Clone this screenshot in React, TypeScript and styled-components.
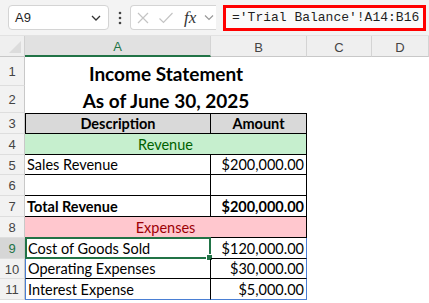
import React from "react";
import styled, { createGlobalStyle, css } from "styled-components";

const Global = createGlobalStyle`
  html, body { margin: 0; padding: 0; background: #ffffff; }
  body { font-family: "Segoe UI", "Liberation Sans", Arial, sans-serif; overflow: hidden; }
  * { box-sizing: border-box; }
`;

const Page = styled.div`
  width: 429px;
  height: 303px;
  overflow: hidden;
  background: #ffffff;
`;

/* ---------- Formula bar ---------- */
const Toolbar = styled.div`
  height: 35px;
  background: #f3f3f3;
  display: flex;
  align-items: center;
  padding: 0 3px 0 8px;
`;

const NameBox = styled.div`
  width: 101px;
  height: 25px;
  background: #ffffff;
  border: 1px solid #d4d4d4;
  border-radius: 4px;
  display: flex;
  align-items: center;
  justify-content: space-between;
  padding: 0 6px 0 6px;
  font-family: "Liberation Sans", Arial, sans-serif;
  font-size: 13px;
  color: #1f1f1f;
`;

const Dots = styled.div`
  width: 21px;
  display: flex;
  justify-content: center;
  color: #444;
`;

const FxBox = styled.div`
  width: 86px;
  height: 25px;
  background: #ffffff;
  border: 1px solid #d4d4d4;
  border-right: none;
  border-radius: 4px 0 0 4px;
  display: flex;
  align-items: center;
  gap: 8px;
  padding-left: 5px;
`;

const FxText = styled.span`
  font-family: "Liberation Serif", "Times New Roman", serif;
  font-style: italic;
  font-size: 17px;
  color: #333;
  margin-left: 2px;
`;

const FormulaInput = styled.div`
  flex: 1;
  height: 26px;
  margin-left: 7px;
  border: 3px solid #ff0000;
  background: #fafafa;
  display: flex;
  align-items: center;
  padding-left: 6px;
  font-family: "Liberation Mono", "DejaVu Sans Mono", monospace;
  font-size: 13px;
  color: #1f1f1f;
  white-space: nowrap;
`;

/* ---------- Sheet ---------- */
const COLS = "25px 186px 96px 65px 1fr";

const HeaderRow = styled.div`
  display: grid;
  grid-template-columns: ${COLS};
  height: 22px;
  background: #efefef;
  border-top: 1px solid #e2e2e2;
`;

const Corner = styled.div`
  position: relative;
  border-right: 1px solid #d0d0d0;
  border-bottom: 1px solid #c8c8c8;
  &::after {
    content: "";
    position: absolute;
    right: 3px;
    bottom: 3px;
    border-left: 12px solid transparent;
    border-bottom: 12px solid #dcdcdc;
  }
`;

const ColHead = styled.div<{ $active?: boolean }>`
  display: flex;
  align-items: center;
  justify-content: center;
  padding-top: 2px;
  font-family: "Liberation Sans", Arial, sans-serif;
  font-size: 13px;
  color: #444;
  border-right: 1px solid #d4d4d4;
  border-bottom: 1px solid #c8c8c8;
  ${(p) =>
    p.$active &&
    css`
      background: #e1e1e1;
      color: #217346;
      border-bottom: 2px solid #217346;
    `}
`;

const Row = styled.div<{ $h: number }>`
  display: grid;
  grid-template-columns: ${COLS};
  height: ${(p) => p.$h}px;
`;

const RowHead = styled.div<{ $active?: boolean }>`
  display: flex;
  align-items: center;
  justify-content: center;
  background: ${(p) => (p.$active ? "#d6d6d6" : "#f2f2f2")};
  color: ${(p) => (p.$active ? "#217346" : "#444")};
  border-right: 1px solid #c8c8c8;
  border-bottom: 1px solid #dedede;
  font-family: "Liberation Sans", Arial, sans-serif;
  font-size: 13px;
  padding-top: 1px;
`;

type CellProps = {
  $span?: number;
  $align?: "left" | "center" | "right";
  $bold?: boolean;
  $bg?: string;
  $color?: string;
  $table?: boolean;
  $top?: boolean;
  $left?: boolean;
  $size?: number;
  $blueLeft?: boolean;
  $blueRight?: boolean;
  $blueBottom?: boolean;
};

const Cell = styled.div<CellProps>`
  position: relative;
  grid-column: span ${(p) => p.$span ?? 1};
  display: flex;
  align-items: flex-end;
  justify-content: ${(p) =>
    p.$align === "center" ? "center" : p.$align === "right" ? "flex-end" : "flex-start"};
  padding: 0 2px 1px 2px;
  font-family: Lato, "Open Sans", "Liberation Sans", sans-serif;
  font-size: ${(p) => p.$size ?? 14.5}px;
  font-weight: ${(p) => (p.$bold ? 700 : 400)};
  color: ${(p) => p.$color ?? "#000"};
  background: ${(p) => p.$bg ?? "transparent"};
  white-space: nowrap;
  ${(p) =>
    p.$table &&
    css`
      border-right: 1px solid #000;
      border-bottom: 1px solid #000;
    `}
  ${(p) => p.$top && css`border-top: 1px solid #000;`}
  ${(p) => p.$left && css`border-left: 1px solid #000;`}
  ${(p) => p.$blueLeft && css`border-left: 1px solid #4a7fd4;`}
  ${(p) => p.$blueRight && css`border-right: 1px solid #4a7fd4;`}
  ${(p) => p.$blueBottom && css`border-bottom: 1px solid #4a7fd4;`}
`;

const Empty = styled.div``;

const Selection = styled.div`
  position: absolute;
  left: -1px;
  top: -1px;
  right: -1px;
  bottom: -1px;
  border: 2px solid #217346;
  pointer-events: none;
  &::after {
    content: "";
    position: absolute;
    right: -4px;
    bottom: -4px;
    width: 5px;
    height: 5px;
    background: #217346;
    border: 1px solid #fff;
  }
`;

const Chevron = () => (
  <svg width="12" height="8" viewBox="0 0 12 8">
    <path d="M2 2 L6 6 L10 2" fill="none" stroke="#333" strokeWidth="1.3" />
  </svg>
);

const VDots = () => (
  <svg width="4" height="14" viewBox="0 0 4 14">
    <circle cx="2" cy="2" r="1.3" fill="#444" />
    <circle cx="2" cy="7" r="1.3" fill="#444" />
    <circle cx="2" cy="12" r="1.3" fill="#444" />
  </svg>
);

const CrossIcon = () => (
  <svg width="14" height="14" viewBox="0 0 14 14">
    <path d="M2 2 L12 12 M12 2 L2 12" stroke="#c4c4c4" strokeWidth="1.2" fill="none" />
  </svg>
);

const CheckIcon = () => (
  <svg width="16" height="14" viewBox="0 0 16 14">
    <path d="M1.5 7.5 L5.5 11.5 L14.5 2" stroke="#c4c4c4" strokeWidth="1.2" fill="none" />
  </svg>
);

const SmallChevron = () => (
  <svg width="10" height="7" viewBox="0 0 10 7">
    <path d="M1 1.5 L5 5.5 L9 1.5" fill="none" stroke="#999" strokeWidth="1.2" />
  </svg>
);

export default function App() {
  return (
    <Page>
      <Global />
      <Toolbar>
        <NameBox>
          <span>A9</span>
          <Chevron />
        </NameBox>
        <Dots>
          <VDots />
        </Dots>
        <FxBox>
          <CrossIcon />
          <CheckIcon />
          <FxText>fx</FxText>
          <SmallChevron />
        </FxBox>
        <FormulaInput>='Trial Balance'!A14:B16</FormulaInput>
      </Toolbar>

      <HeaderRow>
        <Corner />
        <ColHead $active>A</ColHead>
        <ColHead>B</ColHead>
        <ColHead>C</ColHead>
        <ColHead>D</ColHead>
      </HeaderRow>

      <Row $h={29}>
        <RowHead>1</RowHead>
        <Cell $span={2} $align="center" $bold $size={19}>
          Income Statement
        </Cell>
        <Empty />
        <Empty />
      </Row>
      <Row $h={27}>
        <RowHead>2</RowHead>
        <Cell $span={2} $align="center" $bold $size={19}>
          As of June 30, 2025
        </Cell>
        <Empty />
        <Empty />
      </Row>
      <Row $h={21}>
        <RowHead>3</RowHead>
        <Cell $table $top $left $align="center" $bold $bg="#d9d9d9">
          Description
        </Cell>
        <Cell $table $top $align="center" $bold $bg="#d9d9d9">
          Amount
        </Cell>
        <Empty />
        <Empty />
      </Row>
      <Row $h={21}>
        <RowHead>4</RowHead>
        <Cell $table $span={2} $align="center" $bg="#c6efce" $color="#006100">
          Revenue
        </Cell>
        <Empty />
        <Empty />
      </Row>
      <Row $h={20}>
        <RowHead>5</RowHead>
        <Cell $table>Sales Revenue</Cell>
        <Cell $table $align="right">$200,000.00</Cell>
        <Empty />
        <Empty />
      </Row>
      <Row $h={21}>
        <RowHead>6</RowHead>
        <Cell $table />
        <Cell $table />
        <Empty />
        <Empty />
      </Row>
      <Row $h={21}>
        <RowHead>7</RowHead>
        <Cell $table $bold>Total Revenue</Cell>
        <Cell $table $bold $align="right">$200,000.00</Cell>
        <Empty />
        <Empty />
      </Row>
      <Row $h={21}>
        <RowHead>8</RowHead>
        <Cell $table $span={2} $align="center" $bg="#ffc7ce" $color="#9c0006">
          Expenses
        </Cell>
        <Empty />
        <Empty />
      </Row>
      <Row $h={21}>
        <RowHead $active>9</RowHead>
        <Cell $table $blueLeft>
          Cost of Goods Sold
          <Selection />
        </Cell>
        <Cell $table $blueRight $align="right">$120,000.00</Cell>
        <Empty />
        <Empty />
      </Row>
      <Row $h={20}>
        <RowHead>10</RowHead>
        <Cell $table $blueLeft>Operating Expenses</Cell>
        <Cell $table $blueRight $align="right">$30,000.00</Cell>
        <Empty />
        <Empty />
      </Row>
      <Row $h={21}>
        <RowHead>11</RowHead>
        <Cell $table $blueLeft $blueBottom>Interest Expense</Cell>
        <Cell $table $blueRight $blueBottom $align="right">$5,000.00</Cell>
        <Empty />
        <Empty />
      </Row>
    </Page>
  );
}
